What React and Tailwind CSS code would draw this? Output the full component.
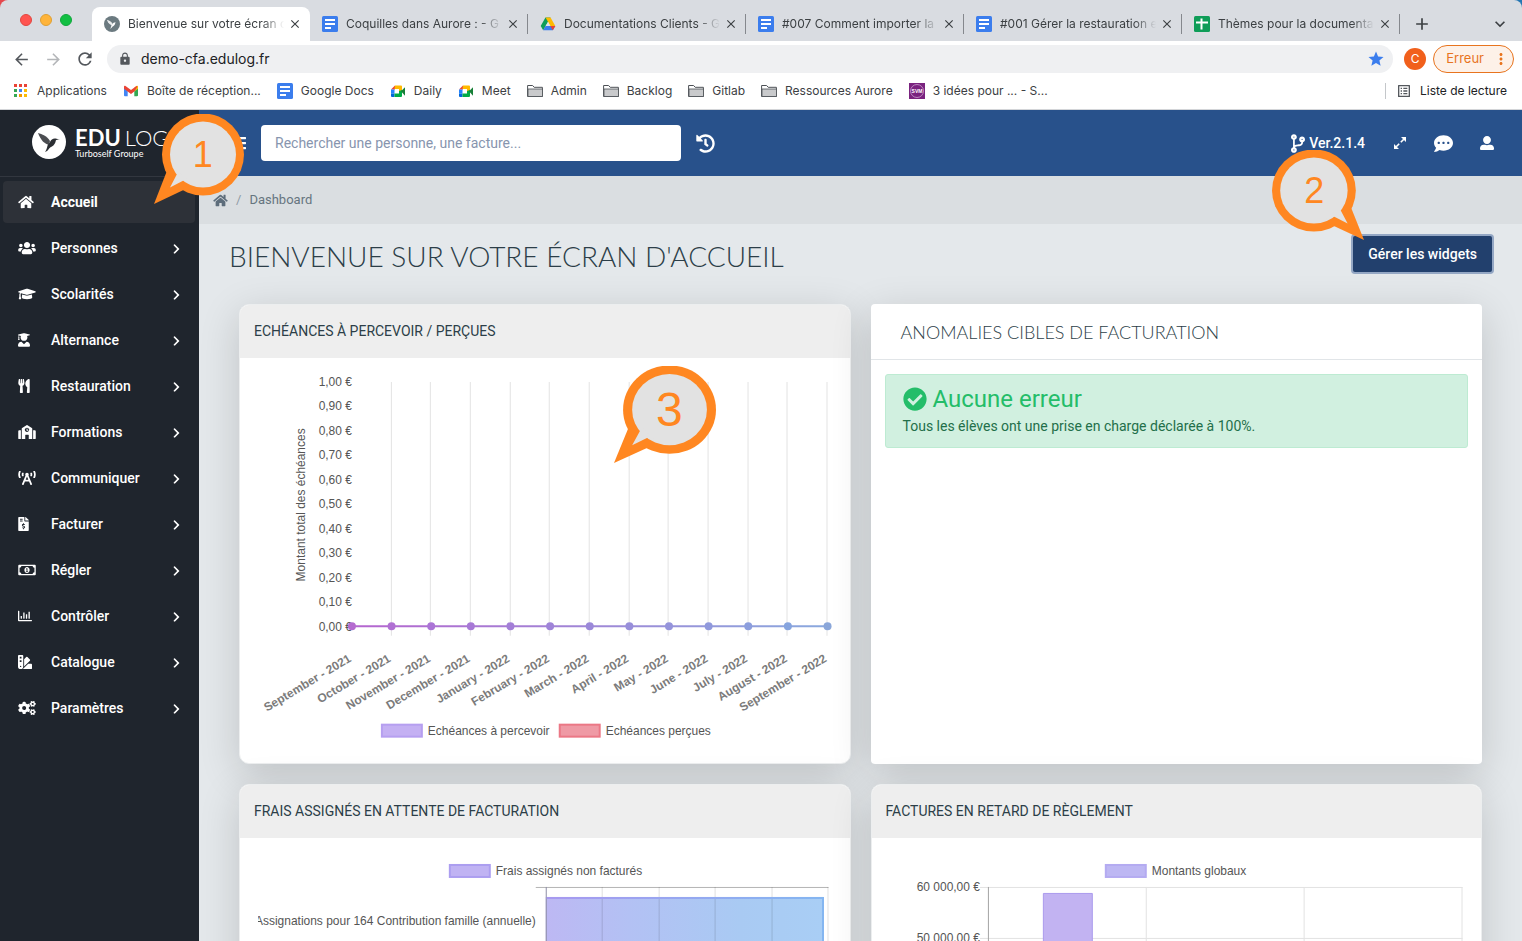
import {
  FaHome,
  FaUsers,
  FaGraduationCap,
  FaUserGraduate,
  FaUtensils,
  FaSchool,
  FaBroadcastTower,
  FaFileInvoiceDollar,
  FaRegMoneyBillAlt,
  FaRegChartBar,
  FaSwatchbook,
  FaCogs,
  FaChevronRight,
  FaBars,
  FaHistory,
  FaCodeBranch,
  FaCommentDots,
  FaUserAlt,
  FaCheckCircle
} from 'react-icons/fa';
import {
  MdArrowBack,
  MdArrowForward,
  MdRefresh,
  MdLock,
  MdStar,
  MdAdd,
  MdClose,
  MdExpandMore,
  MdMoreVert,
  MdOutlineListAlt
} from 'react-icons/md';

const tabs = [
  { title: 'Bienvenue sur votre écran d', icon: 'edulog', active: true },
  { title: 'Coquilles dans Aurore : - G', icon: 'docs' },
  { title: 'Documentations Clients - G', icon: 'drive' },
  { title: '#007 Comment importer la', icon: 'docs' },
  { title: '#001 Gérer la restauration e', icon: 'docs' },
  { title: 'Thèmes pour la documenta', icon: 'sheets' }
];

const bookmarks = [
  { label: 'Applications', icon: 'apps' },
  { label: 'Boîte de réception...', icon: 'gmail' },
  { label: 'Google Docs', icon: 'docs' },
  { label: 'Daily', icon: 'meet' },
  { label: 'Meet', icon: 'meet' },
  { label: 'Admin', icon: 'folder' },
  { label: 'Backlog', icon: 'folder' },
  { label: 'Gitlab', icon: 'folder' },
  { label: 'Ressources Aurore', icon: 'folder' },
  { label: '3 idées pour ... - S...', icon: 'svm' }
];

const menu = [
  { label: 'Accueil', Icon: FaHome, width: 'w-4', active: true },
  { label: 'Personnes', Icon: FaUsers, width: 'w-[18px]' },
  { label: 'Scolarités', Icon: FaGraduationCap, width: 'w-[18px]' },
  { label: 'Alternance', Icon: FaUserGraduate, width: 'w-3' },
  { label: 'Restauration', Icon: FaUtensils, width: 'w-3' },
  { label: 'Formations', Icon: FaSchool, width: 'w-[18px]' },
  { label: 'Communiquer', Icon: FaBroadcastTower, width: 'w-[18px]' },
  { label: 'Facturer', Icon: FaFileInvoiceDollar, width: 'w-[11px]' },
  { label: 'Régler', Icon: FaRegMoneyBillAlt, width: 'w-[18px]' },
  { label: 'Contrôler', Icon: FaRegChartBar, width: 'w-3.5' },
  { label: 'Catalogue', Icon: FaSwatchbook, width: 'w-3.5' },
  { label: 'Paramètres', Icon: FaCogs, width: 'w-[18px]' }
];

const months = [
  'September - 2021',
  'October - 2021',
  'November - 2021',
  'December - 2021',
  'January - 2022',
  'February - 2022',
  'March - 2022',
  'April - 2022',
  'May - 2022',
  'June - 2022',
  'July - 2022',
  'August - 2022',
  'September - 2022'
];

const amounts = ['1,00 €', '0,90 €', '0,80 €', '0,70 €', '0,60 €', '0,50 €', '0,40 €', '0,30 €', '0,20 €', '0,10 €', '0,00 €'];

const pointColors = ['#b56bd0', '#b070d3', '#ab74d6', '#a779d6', '#a37fd7', '#9f84d8', '#9b89d9', '#988fda', '#9594db', '#9099dc', '#8c9edd', '#86a4de', '#8aa6d9'];

function SiteIcon({ name }) {
  if (name === 'docs') {
    return (
      <svg viewBox="0 0 16 16" className="size-4 shrink-0">
        <rect width="16" height="16" rx="1.5" fill="#3b7ded" />
        <path d="M3 4h10M3 8h10M3 12h6" stroke="#fff" strokeWidth="2" />
      </svg>
    );
  }
  if (name === 'sheets') {
    return (
      <svg viewBox="0 0 16 16" className="size-4 shrink-0">
        <rect width="16" height="16" rx="1.5" fill="#0f9d58" />
        <path d="M2 6.5h12M7.5 2.5v11" stroke="#fff" strokeWidth="2" />
      </svg>
    );
  }
  if (name === 'drive') {
    return (
      <svg viewBox="0 0 16 16" className="size-4 shrink-0">
        <path d="M5.5 1.5h5L8 6 3.2 14.3.7 10z" fill="#0f9d58" />
        <path d="M5.5 1.5h5L15.3 10h-5z" fill="#ffba00" />
        <path d="M5.6 10h9.7l-2.5 4.3H3.2z" fill="#3b7ded" />
        <path d="M10.3 10h5l-2.5 4.3z" fill="#ea4335" />
        <path d="M8 5.8 10.4 10H5.6z" fill="#dfe3e6" />
      </svg>
    );
  }
  if (name === 'gmail') {
    return (
      <svg viewBox="0 0 16 16" className="size-4 shrink-0">
        <path d="M1 4v8.3c0 .5.4.9.9.9h2.8V6z" fill="#4285f4" />
        <path d="M15 4v8.3c0 .5-.4.9-.9.9h-2.8V6z" fill="#34a853" />
        <path d="M11.3 4.6 13.500 3c.7-.4 1.500 0 1.500.9v1.800L11.300 8.500z" fill="#fbbc04" />
        <path d="M1 5.700V3.900C1 3 1.800 2.600 2.500 3L8 7.100 13.500 3l1 .5-3.200 5L8 11 1 5.700z" fill="#ea4335" />
      </svg>
    );
  }
  if (name === 'meet') {
    return (
      <svg viewBox="0 0 16 16" className="size-4 shrink-0">
        <path d="M1 6.5 5 2.5v4z" fill="#ea4335" />
        <path d="M1 6.5h3.5v4H1z" fill="#2684fc" />
        <path d="M1 10.5h3.5V14H2a1 1 0 0 1-1-1z" fill="#0066da" />
        <path d="M5 2.5h6a1 1 0 0 1 1 1V8L9 9V6H4.5z" fill="#ffba00" />
        <path d="M4.5 10.5H9V8l3-1v6a1 1 0 0 1-1 1H4.5z" fill="#00ac47" />
        <path d="m11 8.3 4-4.1v8.6z" fill="#188038" />
      </svg>
    );
  }
  if (name === 'folder') {
    return (
      <svg viewBox="0 0 16 16" className="size-4 shrink-0">
        <path d="M.6 13.500V2.500h5l1.600 1.800h8.200v9.200z" fill="#fff" stroke="#4d5156" />
        <path d="M1 6h14.500v7.500H1z" fill="#c9cacc" stroke="#4d5156" strokeWidth=".8" />
      </svg>
    );
  }
  if (name === 'apps') {
    const colors = ['#ea4335', '#ea4335', '#ea4335', '#34a853', '#4285f4', '#fbbc04', '#34a853', '#f29900', '#fbbc04'];
    return (
      <svg viewBox="0 0 16 16" className="size-4 shrink-0">
        {colors.map((color, i) => (
          <rect key={i} x={1 + (i % 3) * 5} y={1 + Math.floor(i / 3) * 5} width="3" height="3" fill={color} />
        ))}
      </svg>
    );
  }
  if (name === 'svm') {
    return (
      <svg viewBox="0 0 16 16" className="size-4 shrink-0">
        <rect width="16" height="16" fill="#7a237f" />
        <circle cx="8" cy="8" r="6.5" fill="none" stroke="#d9b5dc" strokeWidth=".7" />
        <text x="8" y="10" textAnchor="middle" fontSize="5" fontWeight="700" fill="#fff" fontFamily="Liberation Sans, sans-serif">SVM</text>
      </svg>
    );
  }
  return (
    <svg viewBox="0 0 34 34" className="size-4 shrink-0">
      <circle cx="17" cy="17" r="17" fill="#6b7a80" />
      <Bird fill="#fff" />
    </svg>
  );
}

function Bird({ fill }) {
  return (
    <g fill={fill}>
      <path d="M6 8c4 1 9 3 12 8l-1 4c-4-1-8-4-11-12z" opacity=".85" />
      <path d="M28 14.5c-2-.2-3-.8-4.5-.9-2.5-.3-4.5 1-5.5 3.4l-2.5 3.5c-.4 2-.8 3.800-2.500 6.500 1.500-.5 2.700-1.400 3.600-2.700.8-1 1.300-1.700 2.900-2.500 3-1.700 4-4 4.300-6.300.3-.8 2-.9 4.200-1z" />
    </g>
  );
}

// Numbered speech bubble, the tail points down to the left unless flipped
function Callout({ number, flip, className }) {
  return (
    <div className={`pointer-events-none absolute z-20 font-[Liberation_Sans,Arial,sans-serif] text-[#ff8721] ${className}`}>
      <svg viewBox="0 0 90 90" preserveAspectRatio="none" className="size-full">
        <g transform={flip ? 'translate(90 0) scale(-1 1)' : undefined}>
          <circle cx="49" cy="40.5" r="41" fill="#ff8721" />
          <path d="M12.5 58 0 90l30.5-14.5z" fill="#ff8721" />
          <circle cx="49" cy="40.5" r="33" fill="#e2e2e2" />
          <path d="M20 53l3 7-7 13.5L29.5 66.5l9 4z" fill="#e2e2e2" />
        </g>
      </svg>
      <span className={`absolute top-0 flex h-9/10 w-11/12 items-center justify-center ${flip ? 'left-0' : 'right-0'}`}>
        {number}
      </span>
    </div>
  );
}

function BrowserBar() {
  return (
    <header className="shrink-0 font-[Inter,sans-serif] text-xs text-[#3c4043]">
      <div className="flex h-[41px] items-end rounded-t-lg bg-[#d9dce1]">
        <div className="mb-[15px] flex gap-2 pr-5 pl-5">
          <span className="size-3 rounded-full border border-[#e2463f] bg-[#ff5450]" />
          <span className="size-3 rounded-full border border-[#dfa033] bg-[#ffb43a]" />
          <span className="size-3 rounded-full border border-[#10a83c] bg-[#12bf43]" />
        </div>
        <div className="flex min-w-0 flex-1">
          {tabs.map((tab) => (
            <div
              key={tab.title}
              className={`flex h-[34px] w-[218px] min-w-0 items-center pl-3 ${tab.active ? 'rounded-t-lg bg-white' : ''}`}
            >
              <SiteIcon name={tab.icon} />
              <button type="button" className="mr-1 ml-2 min-w-0 flex-1 overflow-hidden text-left whitespace-nowrap [mask-image:linear-gradient(90deg,#000_86%,transparent)]">
                {tab.title}
              </button>
              <button type="button" aria-label="Fermer l'onglet" className="shrink-0">
                <MdClose className="size-3.5" />
              </button>
              <span className={`ml-[7px] h-5 w-px shrink-0 ${tab.active ? '' : 'bg-[#85888d]'}`} />
            </div>
          ))}
          <button type="button" aria-label="Nouvel onglet" className="ml-3 h-[34px]">
            <MdAdd className="size-5" />
          </button>
        </div>
        <button type="button" aria-label="Rechercher dans les onglets" className="mr-3 h-[34px]">
          <MdExpandMore className="size-5" />
        </button>
      </div>

      <div className="flex h-9 items-center bg-white pr-2 pl-3">
        <button type="button" aria-label="Précédent"><MdArrowBack className="size-[19px] text-[#54585d]" /></button>
        <button type="button" aria-label="Suivant" className="ml-[13px]"><MdArrowForward className="size-[19px] text-[#b4b6b9]" /></button>
        <button type="button" aria-label="Actualiser" className="ml-3"><MdRefresh className="size-5 text-[#54585d]" /></button>
        <div className="mr-[11px] ml-3 flex h-7 flex-1 items-center rounded-full bg-[#eff0f2] pr-2 pl-[11px]">
          <MdLock className="size-3.5 text-[#54585d]" />
          <input
            type="text"
            aria-label="Adresse"
            defaultValue="demo-cfa.edulog.fr"
            className="ml-[9px] min-w-0 flex-1 bg-transparent text-sm text-[#202124] outline-none"
          />
          <MdStar className="size-[18px] text-[#3b7ded]" />
        </div>
        <span className="flex size-[22px] items-center justify-center rounded-full bg-[#f1601c] text-white">C</span>
        <button type="button" className="ml-[7px] flex h-7 items-center rounded-full border border-[#e8741e] bg-[#fdf1e8] pr-[3px] pl-3 text-[13px] text-[#e8741e]">
          Erreur
          <MdMoreVert className="ml-2 size-[18px]" />
        </button>
      </div>

      <div className="flex h-[33px] items-center border-b border-[#d3d5d8] bg-white pr-[15px] pb-1 pl-[13px]">
        <nav className="flex min-w-0 flex-1 items-center gap-4">
          {bookmarks.map((bookmark, i) => (
            <a key={i} href="#" className="flex items-center gap-2 whitespace-nowrap">
              <SiteIcon name={bookmark.icon} />
              {bookmark.label}
            </a>
          ))}
        </nav>
        <button type="button" className="flex items-center gap-2 border-l border-[#c4c7ca] pl-2.5 text-[#202124]">
          <MdOutlineListAlt className="size-4 text-[#54585d]" />
          Liste de lecture
        </button>
      </div>
    </header>
  );
}

function Sidebar() {
  return (
    <aside className="w-[199px] shrink-0 bg-[#1f252d] text-white">
      <div className="flex h-[67px] items-center gap-[9px] border-b border-[#32373f] pb-0.5 pl-8">
        <svg viewBox="0 0 34 34" className="size-[34px]">
          <circle cx="17" cy="17" r="17" fill="#fff" />
          <Bird fill="#2b2e33" />
        </svg>
        <div className="font-[Lato,sans-serif]">
          <div className="flex gap-1 text-[22px] leading-[22px] font-light">
            <span className="font-bold">EDU</span>
            <span>LOG</span>
          </div>
          <div className="text-[9px] leading-[9px]">Turboself Groupe</div>
        </div>
      </div>
      <nav className="flex flex-col gap-1 py-1 pr-1 pl-[3px]">
        {menu.map(({ label, Icon, width, active }) => (
          <a
            key={label}
            href="#"
            className={`flex h-[42px] items-center rounded px-[15px] text-sm ${active ? 'bg-[#2d3138] font-bold' : 'font-medium'}`}
          >
            <span className="w-[33px]">
              <Icon className={`h-3.5 ${width}`} />
            </span>
            <span className="flex-1">{label}</span>
            {!active && <FaChevronRight className="mt-0.5 h-3 w-[7px]" />}
          </a>
        ))}
      </nav>
    </aside>
  );
}

function TopBar() {
  return (
    <div className="flex h-[66px] items-center bg-[#28518b] pr-7 pl-8 text-white">
      <button type="button" aria-label="Menu">
        <FaBars className="size-4" />
      </button>
      <input
        type="search"
        aria-label="Recherche"
        placeholder="Rechercher une personne, une facture..."
        className="ml-3.5 h-9 w-[420px] rounded bg-white px-3.5 text-sm text-[#2c3e4a] outline-none placeholder:text-[#8795ae]"
      />
      <button type="button" aria-label="Historique" className="ml-[15px]">
        <FaHistory className="size-[19px]" />
      </button>
      <div className="ml-auto flex items-center">
        <a href="#" className="flex items-center gap-1 text-sm font-medium">
          <FaCodeBranch className="h-[19px] w-3.5" />
          Ver.2.1.4
        </a>
        <button type="button" aria-label="Plein écran" className="ml-[29px]">
          <svg viewBox="0 0 12 12" className="size-3" fill="#fff">
            <path d="M7 0h5v5zM0 7v5h5z" />
            <path d="m6.800 5.200 3-3M5.200 6.800l-3 3" stroke="#fff" strokeWidth="1.600" />
          </svg>
        </button>
        <button type="button" aria-label="Messages" className="ml-7">
          <FaCommentDots className="size-[19px]" />
        </button>
        <button type="button" aria-label="Profil" className="ml-[27px]">
          <FaUserAlt className="size-3.5" />
        </button>
      </div>
    </div>
  );
}

function ChartCard({ title, children }) {
  return (
    <section className="relative flex flex-col rounded-[10px] border border-[#eceeef] bg-white shadow-[0_10px_40px_rgba(0,0,0,0.16)]">
      <h2 className="rounded-t-[9px] bg-[#eeeeee] px-3.5 py-4 text-sm leading-[21px] text-[#2c3e48] uppercase">{title}</h2>
      <div className="px-[18px]">{children}</div>
    </section>
  );
}

function LegendItem({ x, y, label, fill, stroke }) {
  return (
    <g>
      <rect x={x + 1} y={y} width="40" height="12" fill={fill} stroke={stroke} strokeWidth="2" />
      <text x={x + 47} y={y + 10}>{label}</text>
    </g>
  );
}

function DueChart() {
  const left = 94;
  const step = 39.67;
  return (
    <svg viewBox="0 0 574 405" className="block w-full font-[Liberation_Sans,Arial,sans-serif]" fontSize="12" fill="#555">
      <defs>
        <linearGradient id="dueLine" gradientUnits="userSpaceOnUse" x1={left} y1="0" x2={left + step * 12} y2="0">
          <stop offset="0" stopColor="#b565cf" />
          <stop offset="1" stopColor="#8aa9de" />
        </linearGradient>
      </defs>
      {amounts.map((amount, i) => (
        <text key={amount} x="94" y={28 + i * 24.5} textAnchor="end">{amount}</text>
      ))}
      <text transform="translate(47 147) rotate(-90)" textAnchor="middle">Montant total des échéances</text>
      {months.map((month, i) => (
        <g key={month}>
          {i > 0 && <path d={`M${Math.round(left + i * step) - 0.5} 24V278`} stroke="#e3e3e3" />}
          <text transform={`translate(${left + i * step} 303) rotate(-31)`} textAnchor="end" fontWeight="700" fill="#7b7b7b">
            {month}
          </text>
        </g>
      ))}
      <path d={`M${left} 268.5H${left + step * 12}`} stroke="url(#dueLine)" strokeWidth="2" />
      {months.map((month, i) => (
        <circle key={month} cx={left + i * step} cy="268.5" r="4" fill={pointColors[i]} />
      ))}
      <LegendItem x={123} y={367} label="Echéances à percevoir" fill="#c4b0f3" stroke="#b69ff0" />
      <LegendItem x={301} y={367} label="Echéances perçues" fill="#ef9aa5" stroke="#eb7886" />
    </svg>
  );
}

function PendingFeesChart() {
  return (
    <svg viewBox="0 0 574 240" className="block w-full font-[Liberation_Sans,Arial,sans-serif]" fontSize="12" fill="#555">
      <defs>
        <linearGradient id="feesFill">
          <stop offset="0" stopColor="#bdb8f3" />
          <stop offset=".3" stopColor="#b3c1f4" />
          <stop offset=".7" stopColor="#a9caf3" />
          <stop offset="1" stopColor="#a9cef5" />
        </linearGradient>
        <linearGradient id="feesEdge" gradientUnits="userSpaceOnUse" x1="288" y1="0" x2="566" y2="0">
          <stop offset="0" stopColor="#a899f0" />
          <stop offset="1" stopColor="#84b6f1" />
        </linearGradient>
      </defs>
      <LegendItem x={191} y={27} label="Frais assignés non facturés" fill="#c0b3f3" stroke="#ac9ef0" />
      <path d="M278 49.500h293" stroke="#b4b4b4" />
      <rect x="288" y="59" width="278" height="181" fill="url(#feesFill)" />
      <path d="M344.500 49v191M401.500 49v191M457.500 49v191M514.500 49v191M570.500 49v191" stroke="#000" strokeOpacity=".13" />
      <path d="M288.500 49v191" stroke="#8d8da6" />
      <path d="M289 60h276.500V240" fill="none" stroke="url(#feesEdge)" strokeWidth="2" />
      <text x="278" y="87" textAnchor="end">Assignations pour 164 Contribution famille (annuelle)</text>
    </svg>
  );
}

function LateInvoicesChart() {
  return (
    <svg viewBox="0 0 574 240" className="block w-full font-[Liberation_Sans,Arial,sans-serif]" fontSize="12" fill="#555">
      <LegendItem x={215} y={27} label="Montants globaux" fill="#bdb7f3" stroke="#b4abf1" />
      <path d="M90 49.500h483M90 100.500h483M256.500 49v191M414.500 49v191M572.500 49v191" stroke="#e2e2e2" />
      <path d="M98.500 49v191" stroke="#a3a3a3" />
      <path d="M153.500 240V55.500h49V240" fill="#c2b3f2" stroke="#ab9bed" />
      <text x="90" y="53" textAnchor="end">60 000,00 €</text>
      <text x="90" y="104" textAnchor="end">50 000,00 €</text>
    </svg>
  );
}

function App() {
  return (
    <div className="relative flex h-screen flex-col overflow-hidden bg-linear-to-r from-[#e5484d] to-[#2477b3] font-[Roboto,sans-serif]">
      <BrowserBar />
      <div className="flex min-h-0 flex-1">
        <Sidebar />
        <div className="flex min-w-0 flex-1 flex-col bg-[#e4e8eb]">
          <TopBar />
          <nav className="flex h-12 shrink-0 items-center gap-2 bg-[#dadee1] px-3.5 text-[13px] text-[#66757f]">
            <a href="#" aria-label="Accueil"><FaHome className="h-[13px] w-[15px] text-[#5d6d7b]" /></a>
            <span className="text-[#8f9ba5]">/</span>
            <a href="#">Dashboard</a>
          </nav>
          <main className="min-h-0 flex-1 overflow-y-auto [scrollbar-width:none]">
            <div className="flex items-start justify-between px-[30px] pt-3 pb-[30px]">
              <h1 className="pt-0.5 font-[Lato,sans-serif] text-[28px] leading-9 font-light text-[#2c3e48] uppercase">
                Bienvenue sur votre écran d'accueil
              </h1>
              <button type="button" className="h-9 rounded-xs bg-[#22406d] px-[15px] text-sm font-medium text-white ring-2 ring-[#94a7c4]">
                Gérer les widgets
              </button>
            </div>
            <div className="grid grid-cols-2 gap-5 px-10 pb-10">
              <ChartCard title="Echéances à percevoir / perçues">
                <DueChart />
                <Callout number="3" className="top-[61px] left-[374px] h-[97px] w-[102px] text-5xl" />
              </ChartCard>
              <section className="relative rounded bg-white shadow-[0_10px_40px_rgba(0,0,0,0.16)]">
                <h2 className="border-b border-[#e1e5e8] pt-[17px] pr-4 pb-[15px] pl-[30px] font-[Lato,sans-serif] text-lg leading-[23px] font-light text-[#2c3e48] uppercase">
                  Anomalies cibles de facturation
                </h2>
                <div className="m-3.5 rounded-[3px] border border-[#bdebd2] bg-[#d1f0e0] px-[17px] pt-[9px] pb-2.5">
                  <h3 className="flex items-center gap-1.5 text-2xl leading-[30px] text-[#24bd69]">
                    <FaCheckCircle className="size-6" />
                    Aucune erreur
                  </h3>
                  <p className="pt-0.5 text-sm leading-[21px] text-[#236f4a]">
                    Tous les élèves ont une prise en charge déclarée à 100%.
                  </p>
                </div>
              </section>
              <ChartCard title="Frais assignés en attente de facturation">
                <PendingFeesChart />
              </ChartCard>
              <ChartCard title="Factures en retard de règlement">
                <LateInvoicesChart />
              </ChartCard>
            </div>
          </main>
        </div>
      </div>
      <Callout number="1" className="top-[114px] left-[154px] size-[90px] text-4xl" />
      <Callout number="2" flip className="top-[150px] right-[158px] h-[90px] w-[92px] text-4xl" />
    </div>
  );
}

export default App;
